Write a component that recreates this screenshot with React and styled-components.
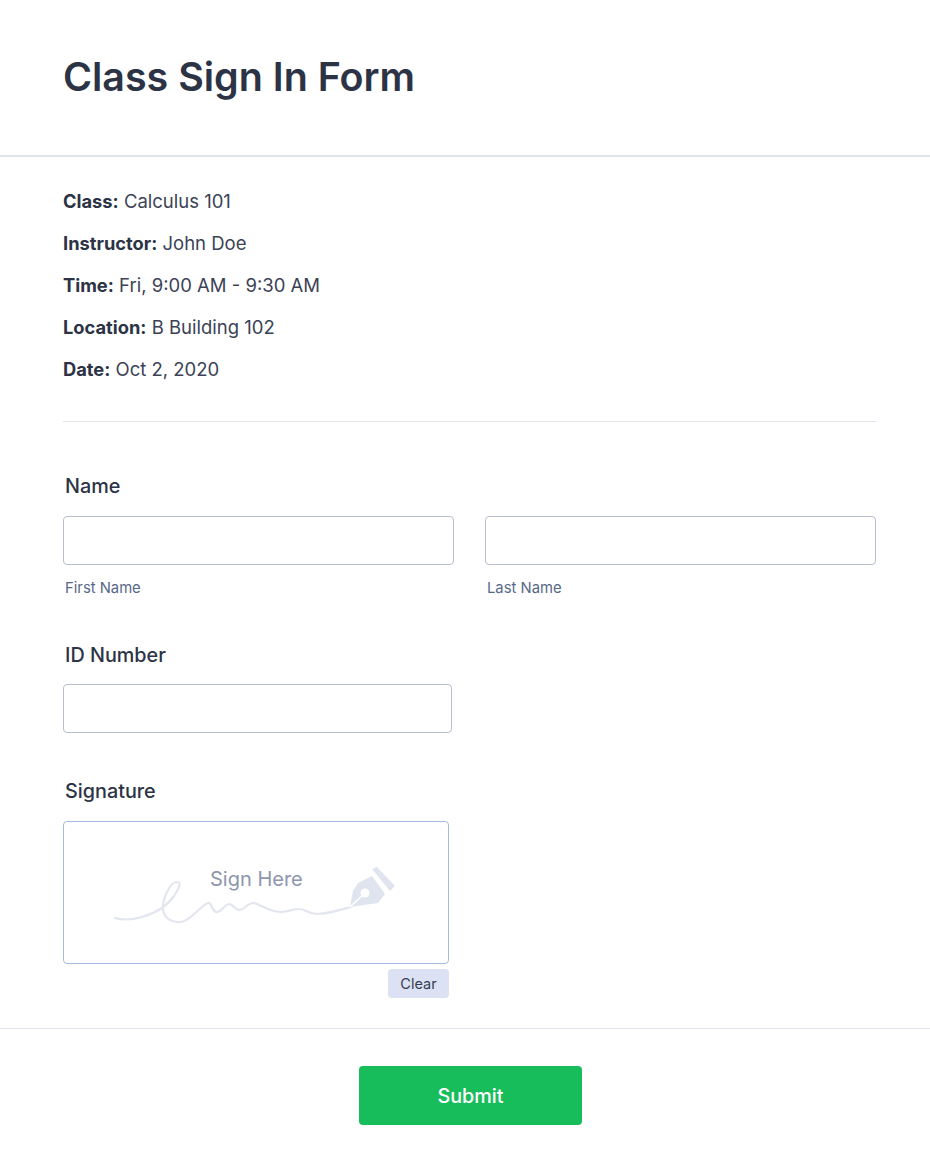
import styled, { createGlobalStyle } from "styled-components";

const GlobalStyle = createGlobalStyle`
    html, body {
        margin: 0;
        padding: 0;
        background: #fff;
    }
    * {
        box-sizing: border-box;
    }
    body {
        font-family: Inter, "Liberation Sans", sans-serif;
        color: #2c3345;
    }
`;

const Page = styled.div`
    width: 930px;
    height: 1174px;
    overflow: hidden;
    background: #fff;
`;

const Header = styled.header`
    height: 157px;
    padding: 53px 63px 0;
    border-bottom: 2px solid #e1e4ec;
`;

const Title = styled.h1`
    margin: 0;
    font-size: 39.4px;
    line-height: 48px;
    font-weight: 600;
    color: #2c3345;
`;

const Details = styled.section`
    margin: 0 54px 0 63px;
    padding: 23px 0 31px;
    border-bottom: 1px solid #e3e5ee;
`;

const DetailRow = styled.p`
    margin: 0;
    height: 42px;
    font-size: 18.5px;
    line-height: 42px;
    color: #3b4256;

    strong {
        font-size: 18.3px;
        font-weight: 700;
        color: #2c3345;
    }
`;

const Form = styled.form`
    padding: 51px 54px 0 63px;
`;

const Field = styled.div`
    margin-bottom: ${props => props.$gap || "44px"};
`;

const Label = styled.label`
    display: block;
    padding-left: 2px;
    font-size: 19.8px;
    line-height: 26px;
    font-weight: 500;
    color: #2c3345;
    margin-bottom: ${props => props.$gap || "17px"};
`;

const NameRow = styled.div`
    display: grid;
    grid-template-columns: 391px 391px;
    column-gap: 31px;
`;

const Input = styled.input`
    display: block;
    width: ${props => props.$width || "100%"};
    height: 49px;
    background: #fff;
    border: 1px solid #b8bdd0;
    border-radius: 4px;
`;

const SubLabel = styled.span`
    display: block;
    margin-top: 13px;
    padding-left: 2px;
    font-size: 14.8px;
    line-height: 20px;
    color: #57678a;
`;

const SignatureBox = styled.div`
    position: relative;
    width: 386px;
    height: 143px;
    border: 1px solid #a6bbe0;
    border-radius: 4px;
    background: #fff;
`;

const SignHere = styled.span`
    position: absolute;
    top: 44px;
    left: 146px;
    font-size: 20px;
    line-height: 26px;
    color: #8d96ae;
`;

const SignatureArt = styled.svg`
    position: absolute;
    left: 0;
    top: 0;
`;

const ClearRow = styled.div`
    display: flex;
    justify-content: flex-end;
    width: 386px;
    margin-top: 5px;
`;

const ClearButton = styled.button`
    width: 61px;
    height: 29px;
    padding: 0;
    border: none;
    border-radius: 4px;
    background: #dce2f3;
    color: #343c55;
    font-family: inherit;
    font-size: 14.5px;
`;

const Footer = styled.footer`
    display: flex;
    justify-content: center;
    margin-top: 30px;
    padding: 37px 0 0 11px;
    border-top: 1px solid #e3e5ee;
`;

const SubmitButton = styled.button`
    width: 223px;
    height: 59px;
    border: none;
    border-radius: 4px;
    background: #18bd5b;
    color: #fff;
    font-family: inherit;
    font-size: 19.8px;
    font-weight: 550;
`;

const details = [
    ["Class:", "Calculus 101"],
    ["Instructor:", "John Doe"],
    ["Time:", "Fri, 9:00 AM - 9:30 AM"],
    ["Location:", "B Building 102"],
    ["Date:", "Oct 2, 2020"],
];

// drawn in box coordinates: page x - 63, page y - 821
function SignatureDrawing() {
    return (
        <SignatureArt width="386" height="143" viewBox="0 0 386 143" fill="none">
            <path
                d="M51 96 C58 98 68 98 78 95 C92 91 103 84 110 74 C115 66 118 60 113 60 C106 60 98 77 99 88 C100 96 108 101 117 100 C127 99 136 84 144 81 C148 80 147 88 152 90 C157 91 161 82 165 82 C169 82 171 88 175 88 C180 88 184 81 189 81 C195 81 203 89 216 90 C224 90 229 87 235 87 C241 87 245 92 253 92 C263 92 276 88 287 85"
                stroke="#e3e6ef"
                strokeWidth="2.2"
                strokeLinecap="round"
            />
            <path fill="#e0e4ee" d="M286 85 L289 69 L294 61 L308 54 L321 72 L314 81 Z" />
            <circle cx="301" cy="71" r="4.5" fill="#fff" />
            <path stroke="#fff" strokeWidth="1.6" d="M286 85 L300 72" />
            <path fill="#e0e4ee" d="M308 47 L313 45 L331 64 L326 69 Z" />
        </SignatureArt>
    );
}

export default function App() {
    return (
        <Page>
            <GlobalStyle />
            <Header>
                <Title>Class Sign In Form</Title>
            </Header>
            <Details>
                {details.map(([name, value]) => (
                    <DetailRow key={name}>
                        <strong>{name}</strong> {value}
                    </DetailRow>
                ))}
            </Details>
            <Form>
                <Field>
                    <Label>Name</Label>
                    <NameRow>
                        <div>
                            <Input />
                            <SubLabel>First Name</SubLabel>
                        </div>
                        <div>
                            <Input />
                            <SubLabel>Last Name</SubLabel>
                        </div>
                    </NameRow>
                </Field>
                <Field $gap="45px">
                    <Label $gap="16px">ID Number</Label>
                    <Input $width="389px" />
                </Field>
                <Field $gap="0">
                    <Label>Signature</Label>
                    <SignatureBox>
                        <SignatureDrawing />
                        <SignHere>Sign Here</SignHere>
                    </SignatureBox>
                    <ClearRow>
                        <ClearButton type="button">Clear</ClearButton>
                    </ClearRow>
                </Field>
            </Form>
            <Footer>
                <SubmitButton type="button">Submit</SubmitButton>
            </Footer>
        </Page>
    );
}
